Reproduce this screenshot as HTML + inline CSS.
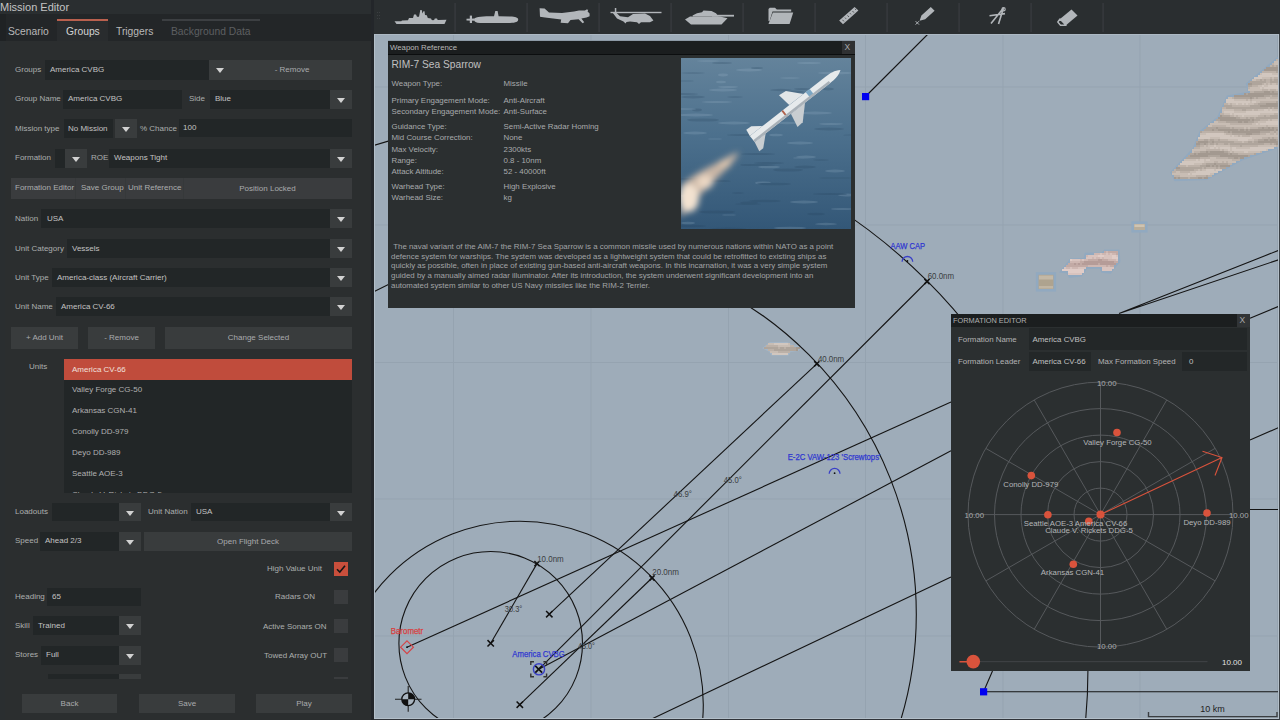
<!DOCTYPE html>
<html><head><meta charset="utf-8">
<style>
*{margin:0;padding:0;box-sizing:border-box}
html,body{width:1280px;height:720px;overflow:hidden;background:#9eacb9;font-family:"Liberation Sans",sans-serif}
.a{position:absolute}
#left{position:absolute;left:0;top:0;width:374px;height:720px;background:#2a2e30;overflow:hidden}
.t{position:absolute;white-space:nowrap;height:20px;line-height:20px;font-size:8px;color:#acaeae}
.inp{position:absolute;background:#222627;height:19px}
.btn{position:absolute;background:#393c3d;height:19px}
.bt{position:absolute;white-space:nowrap;font-size:8px;color:#a9abad;text-align:center;line-height:19px;height:19px}
.dd{position:absolute;background:#393c3d;width:22px;height:19px}
.dd:after{content:"";position:absolute;left:6.5px;top:7.5px;border-left:4.5px solid transparent;border-right:4.5px solid transparent;border-top:5px solid #d2d2d2}
.it{position:absolute;left:72px;font-size:8px;color:#b0b0b0;line-height:20px;height:20px;white-space:nowrap}
.w{position:absolute;white-space:nowrap;font-size:7.9px;color:#a8aaac;line-height:11px;height:11px}
.cb{position:absolute;width:14px;height:14px;background:#3a3c3e;left:334px}
</style></head><body>

<div id="left">
  <div class="t" style="left:0;top:-3.5px;font-size:11px;color:#c4c4c4">Mission Editor</div>
  <!-- tab row -->
  <div class="a" style="left:0;top:14px;width:374px;height:27px;background:#232628"></div>
  <div class="a" style="left:0;top:14px;width:6px;height:27px;background:#1f2224"></div>
  <div class="a" style="left:57px;top:21px;width:51px;height:20px;background:#292c2e"></div>
  <div class="a" style="left:57px;top:19px;width:51px;height:2px;background:#b9604e"></div>
  <div class="a" style="left:162px;top:19px;width:98px;height:2px;background:#3c3f42"></div>
  <div class="t" style="left:8px;top:22px;font-size:10.3px;color:#b9b9b9">Scenario</div>
  <div class="t" style="left:66px;top:22px;font-size:10.3px;color:#d4d4d4">Groups</div>
  <div class="t" style="left:116px;top:22px;font-size:10.3px;color:#b9b9b9">Triggers</div>
  <div class="t" style="left:171px;top:22px;font-size:10.3px;color:#5d5f61">Background Data</div>
  <!-- content -->
  <div class="a" style="left:5px;top:41px;width:369px;height:679px;background:#2b2e2f"></div>

  <!-- Groups row -->
  <div class="t" style="left:15px;top:60px">Groups</div>
  <div class="inp" style="left:45px;top:60px;width:164px;height:20px"></div>
  <div class="t" style="left:50px;top:60px;color:#c2c2c2">America CVBG</div>
  <div class="btn" style="left:209px;top:60px;width:143px;height:20px"></div>
  <div class="dd" style="left:209px;top:60px;background:transparent"></div>
  <div class="bt" style="left:232px;top:60px;width:120px;line-height:20px">- Remove</div>

  <!-- Group name row -->
  <div class="t" style="left:15px;top:89px">Group Name</div>
  <div class="inp" style="left:63px;top:90px;width:119px"></div>
  <div class="t" style="left:68px;top:89px;color:#c2c2c2">America CVBG</div>
  <div class="t" style="left:189px;top:89px">Side</div>
  <div class="inp" style="left:210px;top:90px;width:120px"></div>
  <div class="t" style="left:215px;top:89px;color:#c2c2c2">Blue</div>
  <div class="dd" style="left:330px;top:90px"></div>

  <!-- Mission type row -->
  <div class="t" style="left:15px;top:119px">Mission type</div>
  <div class="inp" style="left:64px;top:119px;width:49px"></div>
  <div class="t" style="left:68px;top:119px;color:#c2c2c2">No Mission</div>
  <div class="dd" style="left:115px;top:119px"></div>
  <div class="t" style="left:140px;top:119px">% Chance</div>
  <div class="inp" style="left:179px;top:119px;width:173px;height:18px"></div>
  <div class="t" style="left:183px;top:118px;color:#c2c2c2">100</div>

  <!-- Formation row -->
  <div class="t" style="left:15px;top:148px">Formation</div>
  <div class="inp" style="left:55px;top:149px;width:10px"></div>
  <div class="dd" style="left:65px;top:149px"></div>
  <div class="t" style="left:91px;top:148px">ROE</div>
  <div class="inp" style="left:109px;top:149px;width:221px"></div>
  <div class="t" style="left:114px;top:148px;color:#c2c2c2">Weapons Tight</div>
  <div class="dd" style="left:330px;top:149px"></div>

  <!-- Formation editor bar -->
  <div class="btn" style="left:11px;top:178px;width:341px;height:21px;background:#3a3c3e"></div>
  <div class="a" style="left:75px;top:178px;width:1px;height:21px;background:#36393a"></div>
  <div class="a" style="left:125px;top:178px;width:1px;height:21px;background:#36393a"></div>
  <div class="a" style="left:183px;top:178px;width:1px;height:21px;background:#36393a"></div>
  <div class="t" style="left:15px;top:178px">Formation Editor</div>
  <div class="t" style="left:81px;top:178px">Save Group</div>
  <div class="t" style="left:128px;top:178px">Unit Reference</div>
  <div class="bt" style="left:183px;top:178px;width:169px;line-height:21px;height:21px">Position Locked</div>

  <!-- Nation -->
  <div class="t" style="left:15px;top:209px">Nation</div>
  <div class="inp" style="left:41px;top:209px;width:289px"></div>
  <div class="t" style="left:47px;top:209px;color:#c2c2c2">USA</div>
  <div class="dd" style="left:330px;top:209px"></div>

  <!-- Unit category -->
  <div class="t" style="left:15px;top:239px">Unit Category</div>
  <div class="inp" style="left:67px;top:239px;width:263px"></div>
  <div class="t" style="left:72px;top:239px;color:#c2c2c2">Vessels</div>
  <div class="dd" style="left:330px;top:239px"></div>

  <!-- Unit type -->
  <div class="t" style="left:15px;top:268px">Unit Type</div>
  <div class="inp" style="left:52px;top:268px;width:278px"></div>
  <div class="t" style="left:57px;top:268px;color:#c2c2c2">America-class (Aircraft Carrier)</div>
  <div class="dd" style="left:330px;top:268px"></div>

  <!-- Unit name -->
  <div class="t" style="left:15px;top:297px">Unit Name</div>
  <div class="inp" style="left:56px;top:297px;width:274px"></div>
  <div class="t" style="left:61px;top:297px;color:#c2c2c2">America CV-66</div>
  <div class="dd" style="left:330px;top:297px"></div>

  <!-- buttons -->
  <div class="btn" style="left:11px;top:327px;width:67px;height:22px"></div>
  <div class="bt" style="left:11px;top:327px;width:67px;line-height:22px;height:22px">+ Add Unit</div>
  <div class="btn" style="left:88px;top:327px;width:67px;height:22px"></div>
  <div class="bt" style="left:88px;top:327px;width:67px;line-height:22px;height:22px">- Remove</div>
  <div class="btn" style="left:165px;top:327px;width:187px;height:22px"></div>
  <div class="bt" style="left:165px;top:327px;width:187px;line-height:22px;height:22px">Change Selected</div>

  <!-- units list -->
  <div class="t" style="left:29px;top:357px">Units</div>
  <div class="a" style="left:64px;top:359px;width:288px;height:134px;background:#222627;overflow:hidden">
    <div class="a" style="left:0;top:0;width:288px;height:21px;background:#c04c3c"></div>
    <div class="it" style="left:8px;top:1px;color:#f0e0dc">America CV-66</div>
    <div class="it" style="left:8px;top:21px">Valley Forge CG-50</div>
    <div class="it" style="left:8px;top:42px">Arkansas CGN-41</div>
    <div class="it" style="left:8px;top:63px">Conolly DD-979</div>
    <div class="it" style="left:8px;top:84px">Deyo DD-989</div>
    <div class="it" style="left:8px;top:105px">Seattle AOE-3</div>
    <div class="it" style="left:8px;top:126px">Claude V. Rickets DDG-5</div>
  </div>

  <!-- Loadouts -->
  <div class="t" style="left:15px;top:502px">Loadouts</div>
  <div class="inp" style="left:52px;top:503px;width:67px;height:18px"></div>
  <div class="dd" style="left:119px;top:503px;height:18px"></div>
  <div class="t" style="left:148px;top:502px">Unit Nation</div>
  <div class="inp" style="left:191px;top:503px;width:139px;height:18px"></div>
  <div class="t" style="left:196px;top:502px;color:#c2c2c2">USA</div>
  <div class="dd" style="left:330px;top:503px;height:18px"></div>

  <!-- Speed -->
  <div class="t" style="left:15px;top:531px">Speed</div>
  <div class="inp" style="left:40px;top:532px;width:79px"></div>
  <div class="t" style="left:45px;top:531px;color:#c2c2c2">Ahead 2/3</div>
  <div class="dd" style="left:119px;top:532px"></div>
  <div class="btn" style="left:144px;top:532px;width:208px"></div>
  <div class="bt" style="left:144px;top:532px;width:208px">Open Flight Deck</div>

  <!-- right checkboxes -->
  <div class="t" style="left:267px;top:559px">High Value Unit</div>
  <div class="cb" style="top:562px;background:#c94f3c"></div>
  <svg class="a" style="left:334px;top:562px" width="14" height="14"><path d="M3 7.2 L5.8 10 L11 3.8" stroke="#151515" stroke-width="1.6" fill="none"/></svg>
  <div class="t" style="left:275px;top:587px">Radars ON</div>
  <div class="cb" style="top:590px"></div>
  <div class="t" style="left:263px;top:616.5px">Active Sonars ON</div>
  <div class="cb" style="top:619px"></div>
  <div class="t" style="left:264px;top:645.5px">Towed Array OUT</div>
  <div class="cb" style="top:648px"></div>

  <!-- Heading etc -->
  <div class="t" style="left:15px;top:587px">Heading</div>
  <div class="inp" style="left:47px;top:588px;width:94px;height:18px"></div>
  <div class="t" style="left:52px;top:587px;color:#c2c2c2">65</div>

  <div class="t" style="left:15px;top:616px">Skill</div>
  <div class="inp" style="left:33px;top:616px;width:86px"></div>
  <div class="t" style="left:38px;top:616px;color:#c2c2c2">Trained</div>
  <div class="dd" style="left:119px;top:616px"></div>

  <div class="t" style="left:15px;top:645px">Stores</div>
  <div class="inp" style="left:41px;top:646px;width:78px"></div>
  <div class="t" style="left:46px;top:645px;color:#c2c2c2">Full</div>
  <div class="dd" style="left:119px;top:646px"></div>

  <div class="inp" style="left:48px;top:674px;width:71px;height:5px"></div>
  <div class="btn" style="left:119px;top:674px;width:22px;height:5px"></div>
  <div class="a" style="left:334px;top:677px;width:14px;height:2px;background:#3a3c3e"></div>

  <!-- bottom buttons -->
  <div class="btn" style="left:22px;top:694px;width:95px;height:19px"></div>
  <div class="bt" style="left:22px;top:694px;width:95px">Back</div>
  <div class="btn" style="left:139px;top:694px;width:96px;height:19px"></div>
  <div class="bt" style="left:139px;top:694px;width:96px">Save</div>
  <div class="btn" style="left:256px;top:694px;width:96px;height:19px"></div>
  <div class="bt" style="left:256px;top:694px;width:96px">Play</div>

  <div class="a" style="left:371px;top:0;width:3px;height:720px;background:#23262a"></div>
</div>

<!-- TOOLBAR -->
<div id="toolbar" class="a" style="left:374px;top:0;width:906px;height:34px;background:#2a2e30"></div>
<svg class="a" style="left:0;top:0" width="1280" height="34" viewBox="0 0 1280 34">
 <g fill="#3a3d40">
  <rect x="454.5" y="3" width="1.2" height="29"/><rect x="526.5" y="3" width="1.2" height="29"/><rect x="598.5" y="3" width="1.2" height="29"/>
  <rect x="670.5" y="3" width="1.2" height="29"/><rect x="742.5" y="3" width="1.2" height="29"/><rect x="814.5" y="3" width="1.2" height="29"/>
  <rect x="886.5" y="3" width="1.2" height="29"/><rect x="958.5" y="3" width="1.2" height="29"/><rect x="1030.5" y="3" width="1.2" height="29"/>
  <rect x="1102.5" y="3" width="1.2" height="29"/>
 </g>
 <g fill="#3b3e41"><rect x="377" y="12" width="1" height="1"/><rect x="379" y="12" width="1" height="1"/><rect x="377" y="15" width="1" height="1"/><rect x="379" y="15" width="1" height="1"/><rect x="377" y="18" width="1" height="1"/><rect x="379" y="18" width="1" height="1"/></g>
 <g fill="#b2b6ba">
  <path d="M394.5,21.3 L446.5,19.8 L444.5,24 L396.5,24 Z M401,21.5 L402,20.4 L408,20.2 L409,18 L413,18 L414,14.6 L416,14.6 L417,16.8 L419,16.8 L420.3,10 L421.7,10 L422.5,13.4 L423.4,11.2 L424.5,11.2 L425,15 L426.8,15.2 L427.8,18 L431,18.4 L432,20.6 Z M434,20.2 L434.8,18.6 L437,18.6 L437.8,20.2 Z"/>
  <path d="M474,19.6 C474,17 480,16.2 490,16.2 L494,16.2 L495.3,11 L497.6,11 L498.6,16.2 L512,16.6 C516.6,17 518.2,18.2 518.2,19.6 C518.2,21.6 516,23 510,23 L480,23 C476,23 474,21.8 474,19.6 Z"/>
  <path d="M466.5,18.8 L474.5,18.4 L474.5,20.8 L466.5,20.4 Z"/>
  <rect x="469.8" y="15.6" width="2.2" height="7.4"/>
  <path d="M539.6,8.2 L544.6,8.6 L549,12.6 L562,13 L574,11.4 L579,10.4 L585,10.4 L586.4,9.6 L588.2,9.8 L587.6,11.6 L589.6,13.6 L589.6,16.2 L586.5,17.4 L581.4,18.4 L584.2,22.2 L582.6,23.2 L578.6,19.2 L570.5,20 L568,23.2 L560.6,22.8 L561.2,19.6 L545,17.6 L540,16.8 Z"/>
  <rect x="610.5" y="11.8" width="51" height="1.4"/>
  <rect x="614.8" y="8" width="1.5" height="6"/>
  <path d="M612.5,12.5 L616,12.5 L620,16.2 L628,17.2 L633,14 L645,13.6 L650,16 L653.4,20.4 L650,22.2 L641,22.2 L639,24 L637,22.2 L630,21.6 L626.5,22 L625.5,23.6 L623.5,21.4 L617,18.6 Z"/>
  <path d="M685,19.4 L690,16.6 L720,16.6 L727.5,18.2 L721.5,24.4 L691,24.4 Z"/>
  <path d="M692.5,15.4 L697,13.2 L702,12.2 L703.5,10.6 L711.5,11 L716,13.2 L718.5,16.6 L693,16.6 Z"/>
  <rect x="712" y="14.8" width="22" height="1.8"/>
  <path d="M768.5,9 L769.8,7.8 L775,7.8 L776.8,9.6 L791.2,9.6 L791.2,11.6 L772.5,11.6 L769.6,21 L768.5,21 Z"/>
  <path d="M772.8,12.6 L793.2,12.6 L789.6,24 L768.5,24 Z"/>
  <path d="M839.2,20.6 L854.6,6.9 L858.4,10.6 L843,24.2 Z"/>
  <path d="M921.4,15.4 L930.8,7 L934.6,10.8 L925.2,19.2 Z M921.4,15.4 L925.2,19.2 L919.6,20.8 Z"/>
  <path d="M1060,19 L1071.5,9.4 L1077.5,15.6 L1066,25.2 Z"/>
 </g>
 <g stroke="#2a2c2e" stroke-width="0.7">
  <path d="M842.5,19.8 l1.4,1.6 M845,17.6 l1,1.2 M847.5,15.4 l1.4,1.6 M850,13.2 l1,1.2 M852.5,11 l1.4,1.6 M855,8.8 l1,1.2"/>
 </g>
 <g stroke="#b2b6ba" fill="none">
  <path d="M915.6,21.2 l3.4,3.4 M919,21.2 l-3.4,3.4" stroke-width="1"/>
  <path d="M1003.5,8 L991,23.5 M1003.5,8 L998.5,24 M989.5,15.8 L1005,13.6" stroke-width="1.6"/>
  <circle cx="1003.6" cy="9.2" r="1.6" stroke-width="1.2"/>
  <path d="M1060,19 L1066,25.2 L1060.5,25.2 L1057.8,22 Z" stroke-width="1.4" stroke-linejoin="round"/>
 </g>
</svg>

<svg id="map" class="a" style="left:374px;top:34px" width="906" height="686" viewBox="374 34 906 686">
 <rect x="374" y="34" width="906" height="686" fill="#9eacb9"/>
 <g stroke="#95a3b0" stroke-width="1">
  <path d="M453.5,34 V720 M591,34 V720 M728.5,34 V720 M865.5,34 V720 M1003,34 V720 M1140,34 V720 M1277.5,34 V720"/>
  <path d="M374,87 H1280 M374,225 H1280 M374,362.5 H1280 M374,499 H1280 M374,636 H1280"/>
 </g>
 <!-- islands -->
 <g stroke="#91a9c0" stroke-width="3.2" stroke-linejoin="miter" fill="#aea398">
  <path d="M1280,57 L1247.5,84 L1249.5,93 L1228,97 L1218.5,118 L1201,132 L1194,149 L1172,172.5 L1175.5,179.5 L1206.5,178.5 L1241.5,159 L1276.5,147 L1280,147 Z"/>
  <path d="M1062,271.2 L1071,260 L1085,259.4 L1086,254.4 L1102.5,253.8 L1105,251.2 L1118,251.2 L1118.8,261.2 L1112.5,268.8 L1110,272 L1102.5,271.2 L1101,267 L1086,267.5 L1081,275 L1070,276.2 L1067.5,272 Z"/>
  <rect x="1037.5" y="273.8" width="17" height="16.2"/>
  <rect x="1133" y="223" width="13" height="8"/>
  <path d="M764,348 L770,343 L787,343 L793,346 L801,347 L798,350 L790,351 L788,354.5 L772,354.5 L770,351 Z" stroke="#a3b5c6" stroke-width="2"/>
 </g>
 <g><rect x="1278" y="57" width="2" height="2" fill="#a39990"/><rect x="1276" y="59" width="2" height="2" fill="#bcb1a8"/><rect x="1278" y="59" width="2" height="2" fill="#afa59c"/><rect x="1274" y="61" width="4" height="2" fill="#c8bdb4"/><rect x="1278" y="61" width="2" height="2" fill="#bcb1a8"/><rect x="1272" y="63" width="2" height="2" fill="#bcb1a8"/><rect x="1274" y="63" width="6" height="2" fill="#c8bdb4"/><rect x="1270" y="65" width="2" height="2" fill="#bcb1a8"/><rect x="1272" y="65" width="2" height="2" fill="#afa59c"/><rect x="1274" y="65" width="2" height="2" fill="#bcb1a8"/><rect x="1276" y="65" width="2" height="2" fill="#afa59c"/><rect x="1278" y="65" width="2" height="2" fill="#bcb1a8"/><rect x="1266" y="67" width="14" height="2" fill="#a39990"/><rect x="1264" y="69" width="16" height="2" fill="#a39990"/><rect x="1262" y="71" width="14" height="2" fill="#bcb1a8"/><rect x="1276" y="71" width="4" height="2" fill="#afa59c"/><rect x="1260" y="73" width="2" height="2" fill="#c8bdb4"/><rect x="1262" y="73" width="10" height="2" fill="#d2c7bf"/><rect x="1272" y="73" width="8" height="2" fill="#c8bdb4"/><rect x="1258" y="75" width="22" height="2" fill="#d2c7bf"/><rect x="1254" y="77" width="8" height="2" fill="#d2c7bf"/><rect x="1262" y="77" width="8" height="2" fill="#c8bdb4"/><rect x="1270" y="77" width="2" height="2" fill="#bcb1a8"/><rect x="1272" y="77" width="2" height="2" fill="#c8bdb4"/><rect x="1274" y="77" width="4" height="2" fill="#bcb1a8"/><rect x="1278" y="77" width="2" height="2" fill="#c8bdb4"/><rect x="1252" y="79" width="4" height="2" fill="#c8bdb4"/><rect x="1256" y="79" width="4" height="2" fill="#bcb1a8"/><rect x="1260" y="79" width="2" height="2" fill="#afa59c"/><rect x="1262" y="79" width="2" height="2" fill="#bcb1a8"/><rect x="1264" y="79" width="2" height="2" fill="#afa59c"/><rect x="1266" y="79" width="4" height="2" fill="#bcb1a8"/><rect x="1270" y="79" width="2" height="2" fill="#afa59c"/><rect x="1272" y="79" width="2" height="2" fill="#bcb1a8"/><rect x="1274" y="79" width="6" height="2" fill="#afa59c"/><rect x="1250" y="81" width="16" height="2" fill="#afa59c"/><rect x="1266" y="81" width="4" height="2" fill="#bcb1a8"/><rect x="1270" y="81" width="10" height="2" fill="#afa59c"/><rect x="1248" y="83" width="4" height="2" fill="#a39990"/><rect x="1252" y="83" width="10" height="2" fill="#afa59c"/><rect x="1262" y="83" width="2" height="2" fill="#bcb1a8"/><rect x="1264" y="83" width="2" height="2" fill="#c8bdb4"/><rect x="1266" y="83" width="2" height="2" fill="#bcb1a8"/><rect x="1268" y="83" width="2" height="2" fill="#c8bdb4"/><rect x="1270" y="83" width="2" height="2" fill="#bcb1a8"/><rect x="1272" y="83" width="4" height="2" fill="#c8bdb4"/><rect x="1276" y="83" width="4" height="2" fill="#bcb1a8"/><rect x="1248" y="85" width="4" height="2" fill="#afa59c"/><rect x="1252" y="85" width="6" height="2" fill="#bcb1a8"/><rect x="1258" y="85" width="4" height="2" fill="#c8bdb4"/><rect x="1262" y="85" width="2" height="2" fill="#d2c7bf"/><rect x="1264" y="85" width="4" height="2" fill="#c8bdb4"/><rect x="1268" y="85" width="12" height="2" fill="#d2c7bf"/><rect x="1248" y="87" width="2" height="2" fill="#bcb1a8"/><rect x="1250" y="87" width="10" height="2" fill="#c8bdb4"/><rect x="1260" y="87" width="2" height="2" fill="#d2c7bf"/><rect x="1262" y="87" width="2" height="2" fill="#c8bdb4"/><rect x="1264" y="87" width="16" height="2" fill="#d2c7bf"/><rect x="1248" y="89" width="14" height="2" fill="#c8bdb4"/><rect x="1262" y="89" width="6" height="2" fill="#bcb1a8"/><rect x="1268" y="89" width="2" height="2" fill="#c8bdb4"/><rect x="1270" y="89" width="6" height="2" fill="#bcb1a8"/><rect x="1276" y="89" width="4" height="2" fill="#c8bdb4"/><rect x="1250" y="91" width="4" height="2" fill="#bcb1a8"/><rect x="1254" y="91" width="10" height="2" fill="#afa59c"/><rect x="1264" y="91" width="6" height="2" fill="#a39990"/><rect x="1270" y="91" width="2" height="2" fill="#afa59c"/><rect x="1272" y="91" width="2" height="2" fill="#a39990"/><rect x="1274" y="91" width="6" height="2" fill="#afa59c"/><rect x="1244" y="93" width="2" height="2" fill="#a39990"/><rect x="1246" y="93" width="2" height="2" fill="#afa59c"/><rect x="1248" y="93" width="32" height="2" fill="#a39990"/><rect x="1234" y="95" width="30" height="2" fill="#a39990"/><rect x="1264" y="95" width="6" height="2" fill="#afa59c"/><rect x="1270" y="95" width="2" height="2" fill="#bcb1a8"/><rect x="1272" y="95" width="6" height="2" fill="#afa59c"/><rect x="1278" y="95" width="2" height="2" fill="#bcb1a8"/><rect x="1228" y="97" width="4" height="2" fill="#c8bdb4"/><rect x="1232" y="97" width="2" height="2" fill="#bcb1a8"/><rect x="1234" y="97" width="16" height="2" fill="#afa59c"/><rect x="1250" y="97" width="2" height="2" fill="#a39990"/><rect x="1252" y="97" width="2" height="2" fill="#afa59c"/><rect x="1254" y="97" width="2" height="2" fill="#bcb1a8"/><rect x="1256" y="97" width="2" height="2" fill="#afa59c"/><rect x="1258" y="97" width="8" height="2" fill="#bcb1a8"/><rect x="1266" y="97" width="4" height="2" fill="#c8bdb4"/><rect x="1270" y="97" width="10" height="2" fill="#bcb1a8"/><rect x="1226" y="99" width="8" height="2" fill="#d2c7bf"/><rect x="1234" y="99" width="12" height="2" fill="#c8bdb4"/><rect x="1246" y="99" width="2" height="2" fill="#bcb1a8"/><rect x="1248" y="99" width="2" height="2" fill="#c8bdb4"/><rect x="1250" y="99" width="2" height="2" fill="#bcb1a8"/><rect x="1252" y="99" width="28" height="2" fill="#c8bdb4"/><rect x="1226" y="101" width="24" height="2" fill="#d2c7bf"/><rect x="1250" y="101" width="2" height="2" fill="#c8bdb4"/><rect x="1252" y="101" width="4" height="2" fill="#d2c7bf"/><rect x="1256" y="101" width="4" height="2" fill="#c8bdb4"/><rect x="1260" y="101" width="16" height="2" fill="#bcb1a8"/><rect x="1276" y="101" width="2" height="2" fill="#afa59c"/><rect x="1278" y="101" width="2" height="2" fill="#bcb1a8"/><rect x="1224" y="103" width="4" height="2" fill="#bcb1a8"/><rect x="1228" y="103" width="2" height="2" fill="#c8bdb4"/><rect x="1230" y="103" width="2" height="2" fill="#bcb1a8"/><rect x="1232" y="103" width="4" height="2" fill="#c8bdb4"/><rect x="1236" y="103" width="2" height="2" fill="#d2c7bf"/><rect x="1238" y="103" width="4" height="2" fill="#c8bdb4"/><rect x="1242" y="103" width="2" height="2" fill="#d2c7bf"/><rect x="1244" y="103" width="2" height="2" fill="#c8bdb4"/><rect x="1246" y="103" width="2" height="2" fill="#d2c7bf"/><rect x="1248" y="103" width="6" height="2" fill="#c8bdb4"/><rect x="1254" y="103" width="4" height="2" fill="#bcb1a8"/><rect x="1258" y="103" width="8" height="2" fill="#afa59c"/><rect x="1266" y="103" width="14" height="2" fill="#a39990"/><rect x="1224" y="105" width="8" height="2" fill="#afa59c"/><rect x="1232" y="105" width="18" height="2" fill="#bcb1a8"/><rect x="1250" y="105" width="10" height="2" fill="#afa59c"/><rect x="1260" y="105" width="20" height="2" fill="#a39990"/><rect x="1222" y="107" width="4" height="2" fill="#bcb1a8"/><rect x="1226" y="107" width="42" height="2" fill="#afa59c"/><rect x="1268" y="107" width="2" height="2" fill="#bcb1a8"/><rect x="1270" y="107" width="2" height="2" fill="#afa59c"/><rect x="1272" y="107" width="2" height="2" fill="#bcb1a8"/><rect x="1274" y="107" width="6" height="2" fill="#afa59c"/><rect x="1222" y="109" width="12" height="2" fill="#c8bdb4"/><rect x="1234" y="109" width="8" height="2" fill="#bcb1a8"/><rect x="1242" y="109" width="4" height="2" fill="#afa59c"/><rect x="1246" y="109" width="6" height="2" fill="#bcb1a8"/><rect x="1252" y="109" width="2" height="2" fill="#c8bdb4"/><rect x="1254" y="109" width="4" height="2" fill="#bcb1a8"/><rect x="1258" y="109" width="6" height="2" fill="#c8bdb4"/><rect x="1264" y="109" width="4" height="2" fill="#d2c7bf"/><rect x="1268" y="109" width="2" height="2" fill="#c8bdb4"/><rect x="1270" y="109" width="2" height="2" fill="#d2c7bf"/><rect x="1272" y="109" width="6" height="2" fill="#c8bdb4"/><rect x="1278" y="109" width="2" height="2" fill="#bcb1a8"/><rect x="1222" y="111" width="2" height="2" fill="#c8bdb4"/><rect x="1224" y="111" width="10" height="2" fill="#d2c7bf"/><rect x="1234" y="111" width="12" height="2" fill="#c8bdb4"/><rect x="1246" y="111" width="34" height="2" fill="#d2c7bf"/><rect x="1220" y="113" width="4" height="2" fill="#bcb1a8"/><rect x="1224" y="113" width="6" height="2" fill="#c8bdb4"/><rect x="1230" y="113" width="2" height="2" fill="#d2c7bf"/><rect x="1232" y="113" width="2" height="2" fill="#c8bdb4"/><rect x="1234" y="113" width="26" height="2" fill="#d2c7bf"/><rect x="1260" y="113" width="14" height="2" fill="#c8bdb4"/><rect x="1274" y="113" width="6" height="2" fill="#bcb1a8"/><rect x="1220" y="115" width="2" height="2" fill="#a39990"/><rect x="1222" y="115" width="8" height="2" fill="#afa59c"/><rect x="1230" y="115" width="4" height="2" fill="#bcb1a8"/><rect x="1234" y="115" width="2" height="2" fill="#c8bdb4"/><rect x="1236" y="115" width="2" height="2" fill="#bcb1a8"/><rect x="1238" y="115" width="4" height="2" fill="#c8bdb4"/><rect x="1242" y="115" width="2" height="2" fill="#d2c7bf"/><rect x="1244" y="115" width="14" height="2" fill="#c8bdb4"/><rect x="1258" y="115" width="6" height="2" fill="#bcb1a8"/><rect x="1264" y="115" width="2" height="2" fill="#afa59c"/><rect x="1266" y="115" width="4" height="2" fill="#bcb1a8"/><rect x="1270" y="115" width="8" height="2" fill="#afa59c"/><rect x="1278" y="115" width="2" height="2" fill="#bcb1a8"/><rect x="1218" y="117" width="18" height="2" fill="#a39990"/><rect x="1236" y="117" width="4" height="2" fill="#afa59c"/><rect x="1240" y="117" width="6" height="2" fill="#bcb1a8"/><rect x="1246" y="117" width="2" height="2" fill="#afa59c"/><rect x="1248" y="117" width="2" height="2" fill="#bcb1a8"/><rect x="1250" y="117" width="4" height="2" fill="#afa59c"/><rect x="1254" y="117" width="2" height="2" fill="#bcb1a8"/><rect x="1256" y="117" width="24" height="2" fill="#afa59c"/><rect x="1216" y="119" width="4" height="2" fill="#afa59c"/><rect x="1220" y="119" width="30" height="2" fill="#a39990"/><rect x="1250" y="119" width="2" height="2" fill="#afa59c"/><rect x="1252" y="119" width="2" height="2" fill="#a39990"/><rect x="1254" y="119" width="6" height="2" fill="#afa59c"/><rect x="1260" y="119" width="8" height="2" fill="#bcb1a8"/><rect x="1268" y="119" width="2" height="2" fill="#c8bdb4"/><rect x="1270" y="119" width="2" height="2" fill="#bcb1a8"/><rect x="1272" y="119" width="6" height="2" fill="#c8bdb4"/><rect x="1278" y="119" width="2" height="2" fill="#bcb1a8"/><rect x="1214" y="121" width="4" height="2" fill="#c8bdb4"/><rect x="1218" y="121" width="8" height="2" fill="#bcb1a8"/><rect x="1226" y="121" width="12" height="2" fill="#afa59c"/><rect x="1238" y="121" width="4" height="2" fill="#a39990"/><rect x="1242" y="121" width="2" height="2" fill="#afa59c"/><rect x="1244" y="121" width="4" height="2" fill="#a39990"/><rect x="1248" y="121" width="6" height="2" fill="#afa59c"/><rect x="1254" y="121" width="4" height="2" fill="#bcb1a8"/><rect x="1258" y="121" width="8" height="2" fill="#c8bdb4"/><rect x="1266" y="121" width="14" height="2" fill="#d2c7bf"/><rect x="1210" y="123" width="20" height="2" fill="#c8bdb4"/><rect x="1230" y="123" width="22" height="2" fill="#bcb1a8"/><rect x="1252" y="123" width="4" height="2" fill="#c8bdb4"/><rect x="1256" y="123" width="2" height="2" fill="#d2c7bf"/><rect x="1258" y="123" width="2" height="2" fill="#c8bdb4"/><rect x="1260" y="123" width="20" height="2" fill="#d2c7bf"/><rect x="1208" y="125" width="4" height="2" fill="#c8bdb4"/><rect x="1212" y="125" width="14" height="2" fill="#bcb1a8"/><rect x="1226" y="125" width="40" height="2" fill="#c8bdb4"/><rect x="1266" y="125" width="2" height="2" fill="#bcb1a8"/><rect x="1268" y="125" width="12" height="2" fill="#c8bdb4"/><rect x="1206" y="127" width="10" height="2" fill="#afa59c"/><rect x="1216" y="127" width="2" height="2" fill="#a39990"/><rect x="1218" y="127" width="12" height="2" fill="#afa59c"/><rect x="1230" y="127" width="2" height="2" fill="#bcb1a8"/><rect x="1232" y="127" width="2" height="2" fill="#afa59c"/><rect x="1234" y="127" width="10" height="2" fill="#bcb1a8"/><rect x="1244" y="127" width="2" height="2" fill="#c8bdb4"/><rect x="1246" y="127" width="2" height="2" fill="#bcb1a8"/><rect x="1248" y="127" width="2" height="2" fill="#c8bdb4"/><rect x="1250" y="127" width="8" height="2" fill="#bcb1a8"/><rect x="1258" y="127" width="4" height="2" fill="#afa59c"/><rect x="1262" y="127" width="2" height="2" fill="#a39990"/><rect x="1264" y="127" width="4" height="2" fill="#afa59c"/><rect x="1268" y="127" width="2" height="2" fill="#a39990"/><rect x="1270" y="127" width="2" height="2" fill="#afa59c"/><rect x="1272" y="127" width="2" height="2" fill="#a39990"/><rect x="1274" y="127" width="6" height="2" fill="#afa59c"/><rect x="1204" y="129" width="8" height="2" fill="#afa59c"/><rect x="1212" y="129" width="2" height="2" fill="#a39990"/><rect x="1214" y="129" width="4" height="2" fill="#afa59c"/><rect x="1218" y="129" width="20" height="2" fill="#a39990"/><rect x="1238" y="129" width="2" height="2" fill="#afa59c"/><rect x="1240" y="129" width="4" height="2" fill="#a39990"/><rect x="1244" y="129" width="2" height="2" fill="#afa59c"/><rect x="1246" y="129" width="2" height="2" fill="#a39990"/><rect x="1248" y="129" width="2" height="2" fill="#afa59c"/><rect x="1250" y="129" width="24" height="2" fill="#a39990"/><rect x="1274" y="129" width="2" height="2" fill="#afa59c"/><rect x="1276" y="129" width="2" height="2" fill="#a39990"/><rect x="1278" y="129" width="2" height="2" fill="#afa59c"/><rect x="1200" y="131" width="2" height="2" fill="#afa59c"/><rect x="1202" y="131" width="22" height="2" fill="#bcb1a8"/><rect x="1224" y="131" width="4" height="2" fill="#afa59c"/><rect x="1228" y="131" width="2" height="2" fill="#a39990"/><rect x="1230" y="131" width="2" height="2" fill="#afa59c"/><rect x="1232" y="131" width="28" height="2" fill="#a39990"/><rect x="1260" y="131" width="10" height="2" fill="#afa59c"/><rect x="1270" y="131" width="4" height="2" fill="#bcb1a8"/><rect x="1274" y="131" width="2" height="2" fill="#afa59c"/><rect x="1276" y="131" width="2" height="2" fill="#bcb1a8"/><rect x="1278" y="131" width="2" height="2" fill="#afa59c"/><rect x="1200" y="133" width="6" height="2" fill="#c8bdb4"/><rect x="1206" y="133" width="18" height="2" fill="#d2c7bf"/><rect x="1224" y="133" width="2" height="2" fill="#c8bdb4"/><rect x="1226" y="133" width="6" height="2" fill="#bcb1a8"/><rect x="1232" y="133" width="14" height="2" fill="#afa59c"/><rect x="1246" y="133" width="6" height="2" fill="#a39990"/><rect x="1252" y="133" width="8" height="2" fill="#afa59c"/><rect x="1260" y="133" width="6" height="2" fill="#bcb1a8"/><rect x="1266" y="133" width="4" height="2" fill="#c8bdb4"/><rect x="1270" y="133" width="4" height="2" fill="#bcb1a8"/><rect x="1274" y="133" width="2" height="2" fill="#c8bdb4"/><rect x="1276" y="133" width="4" height="2" fill="#bcb1a8"/><rect x="1200" y="135" width="30" height="2" fill="#d2c7bf"/><rect x="1230" y="135" width="2" height="2" fill="#c8bdb4"/><rect x="1232" y="135" width="2" height="2" fill="#d2c7bf"/><rect x="1234" y="135" width="4" height="2" fill="#c8bdb4"/><rect x="1238" y="135" width="2" height="2" fill="#bcb1a8"/><rect x="1240" y="135" width="2" height="2" fill="#c8bdb4"/><rect x="1242" y="135" width="8" height="2" fill="#bcb1a8"/><rect x="1250" y="135" width="30" height="2" fill="#c8bdb4"/><rect x="1198" y="137" width="12" height="2" fill="#d2c7bf"/><rect x="1210" y="137" width="10" height="2" fill="#c8bdb4"/><rect x="1220" y="137" width="32" height="2" fill="#d2c7bf"/><rect x="1252" y="137" width="10" height="2" fill="#c8bdb4"/><rect x="1262" y="137" width="6" height="2" fill="#bcb1a8"/><rect x="1268" y="137" width="2" height="2" fill="#afa59c"/><rect x="1270" y="137" width="2" height="2" fill="#bcb1a8"/><rect x="1272" y="137" width="2" height="2" fill="#afa59c"/><rect x="1274" y="137" width="6" height="2" fill="#bcb1a8"/><rect x="1198" y="139" width="6" height="2" fill="#bcb1a8"/><rect x="1204" y="139" width="4" height="2" fill="#afa59c"/><rect x="1208" y="139" width="2" height="2" fill="#bcb1a8"/><rect x="1210" y="139" width="4" height="2" fill="#afa59c"/><rect x="1214" y="139" width="4" height="2" fill="#bcb1a8"/><rect x="1218" y="139" width="2" height="2" fill="#afa59c"/><rect x="1220" y="139" width="8" height="2" fill="#bcb1a8"/><rect x="1228" y="139" width="10" height="2" fill="#c8bdb4"/><rect x="1238" y="139" width="10" height="2" fill="#d2c7bf"/><rect x="1248" y="139" width="6" height="2" fill="#c8bdb4"/><rect x="1254" y="139" width="4" height="2" fill="#bcb1a8"/><rect x="1258" y="139" width="6" height="2" fill="#afa59c"/><rect x="1264" y="139" width="4" height="2" fill="#a39990"/><rect x="1268" y="139" width="2" height="2" fill="#afa59c"/><rect x="1270" y="139" width="6" height="2" fill="#a39990"/><rect x="1276" y="139" width="2" height="2" fill="#afa59c"/><rect x="1278" y="139" width="2" height="2" fill="#a39990"/><rect x="1196" y="141" width="2" height="2" fill="#afa59c"/><rect x="1198" y="141" width="10" height="2" fill="#a39990"/><rect x="1208" y="141" width="4" height="2" fill="#afa59c"/><rect x="1212" y="141" width="2" height="2" fill="#a39990"/><rect x="1214" y="141" width="20" height="2" fill="#afa59c"/><rect x="1234" y="141" width="8" height="2" fill="#bcb1a8"/><rect x="1242" y="141" width="2" height="2" fill="#c8bdb4"/><rect x="1244" y="141" width="4" height="2" fill="#bcb1a8"/><rect x="1248" y="141" width="4" height="2" fill="#afa59c"/><rect x="1252" y="141" width="2" height="2" fill="#bcb1a8"/><rect x="1254" y="141" width="4" height="2" fill="#afa59c"/><rect x="1258" y="141" width="22" height="2" fill="#a39990"/><rect x="1196" y="143" width="4" height="2" fill="#a39990"/><rect x="1200" y="143" width="4" height="2" fill="#afa59c"/><rect x="1204" y="143" width="2" height="2" fill="#a39990"/><rect x="1206" y="143" width="2" height="2" fill="#afa59c"/><rect x="1208" y="143" width="2" height="2" fill="#bcb1a8"/><rect x="1210" y="143" width="4" height="2" fill="#afa59c"/><rect x="1214" y="143" width="2" height="2" fill="#bcb1a8"/><rect x="1216" y="143" width="2" height="2" fill="#afa59c"/><rect x="1218" y="143" width="6" height="2" fill="#bcb1a8"/><rect x="1224" y="143" width="4" height="2" fill="#afa59c"/><rect x="1228" y="143" width="2" height="2" fill="#bcb1a8"/><rect x="1230" y="143" width="34" height="2" fill="#afa59c"/><rect x="1264" y="143" width="6" height="2" fill="#bcb1a8"/><rect x="1270" y="143" width="2" height="2" fill="#afa59c"/><rect x="1272" y="143" width="2" height="2" fill="#bcb1a8"/><rect x="1274" y="143" width="2" height="2" fill="#afa59c"/><rect x="1276" y="143" width="2" height="2" fill="#a39990"/><rect x="1278" y="143" width="2" height="2" fill="#afa59c"/><rect x="1196" y="145" width="4" height="2" fill="#afa59c"/><rect x="1200" y="145" width="4" height="2" fill="#bcb1a8"/><rect x="1204" y="145" width="2" height="2" fill="#c8bdb4"/><rect x="1206" y="145" width="2" height="2" fill="#bcb1a8"/><rect x="1208" y="145" width="6" height="2" fill="#c8bdb4"/><rect x="1214" y="145" width="2" height="2" fill="#d2c7bf"/><rect x="1216" y="145" width="14" height="2" fill="#c8bdb4"/><rect x="1230" y="145" width="10" height="2" fill="#bcb1a8"/><rect x="1240" y="145" width="2" height="2" fill="#afa59c"/><rect x="1242" y="145" width="16" height="2" fill="#bcb1a8"/><rect x="1258" y="145" width="18" height="2" fill="#c8bdb4"/><rect x="1276" y="145" width="4" height="2" fill="#bcb1a8"/><rect x="1194" y="147" width="6" height="2" fill="#bcb1a8"/><rect x="1200" y="147" width="10" height="2" fill="#c8bdb4"/><rect x="1210" y="147" width="4" height="2" fill="#d2c7bf"/><rect x="1214" y="147" width="2" height="2" fill="#c8bdb4"/><rect x="1216" y="147" width="2" height="2" fill="#d2c7bf"/><rect x="1218" y="147" width="2" height="2" fill="#c8bdb4"/><rect x="1220" y="147" width="10" height="2" fill="#d2c7bf"/><rect x="1230" y="147" width="2" height="2" fill="#c8bdb4"/><rect x="1232" y="147" width="4" height="2" fill="#d2c7bf"/><rect x="1236" y="147" width="14" height="2" fill="#c8bdb4"/><rect x="1250" y="147" width="24" height="2" fill="#d2c7bf"/><rect x="1192" y="149" width="14" height="2" fill="#c8bdb4"/><rect x="1206" y="149" width="14" height="2" fill="#bcb1a8"/><rect x="1220" y="149" width="2" height="2" fill="#c8bdb4"/><rect x="1222" y="149" width="2" height="2" fill="#bcb1a8"/><rect x="1224" y="149" width="4" height="2" fill="#c8bdb4"/><rect x="1228" y="149" width="2" height="2" fill="#d2c7bf"/><rect x="1230" y="149" width="2" height="2" fill="#c8bdb4"/><rect x="1232" y="149" width="34" height="2" fill="#d2c7bf"/><rect x="1266" y="149" width="2" height="2" fill="#c8bdb4"/><rect x="1192" y="151" width="2" height="2" fill="#c8bdb4"/><rect x="1194" y="151" width="6" height="2" fill="#bcb1a8"/><rect x="1200" y="151" width="6" height="2" fill="#afa59c"/><rect x="1206" y="151" width="2" height="2" fill="#a39990"/><rect x="1208" y="151" width="2" height="2" fill="#afa59c"/><rect x="1210" y="151" width="14" height="2" fill="#a39990"/><rect x="1224" y="151" width="4" height="2" fill="#afa59c"/><rect x="1228" y="151" width="2" height="2" fill="#bcb1a8"/><rect x="1230" y="151" width="2" height="2" fill="#c8bdb4"/><rect x="1232" y="151" width="2" height="2" fill="#bcb1a8"/><rect x="1234" y="151" width="10" height="2" fill="#c8bdb4"/><rect x="1244" y="151" width="4" height="2" fill="#d2c7bf"/><rect x="1248" y="151" width="12" height="2" fill="#c8bdb4"/><rect x="1260" y="151" width="2" height="2" fill="#bcb1a8"/><rect x="1190" y="153" width="4" height="2" fill="#afa59c"/><rect x="1194" y="153" width="2" height="2" fill="#a39990"/><rect x="1196" y="153" width="2" height="2" fill="#afa59c"/><rect x="1198" y="153" width="30" height="2" fill="#a39990"/><rect x="1228" y="153" width="2" height="2" fill="#afa59c"/><rect x="1230" y="153" width="2" height="2" fill="#a39990"/><rect x="1232" y="153" width="6" height="2" fill="#afa59c"/><rect x="1238" y="153" width="16" height="2" fill="#bcb1a8"/><rect x="1254" y="153" width="2" height="2" fill="#afa59c"/><rect x="1188" y="155" width="2" height="2" fill="#afa59c"/><rect x="1190" y="155" width="18" height="2" fill="#a39990"/><rect x="1208" y="155" width="12" height="2" fill="#afa59c"/><rect x="1220" y="155" width="28" height="2" fill="#a39990"/><rect x="1248" y="155" width="2" height="2" fill="#afa59c"/><rect x="1186" y="157" width="14" height="2" fill="#afa59c"/><rect x="1200" y="157" width="10" height="2" fill="#bcb1a8"/><rect x="1210" y="157" width="6" height="2" fill="#c8bdb4"/><rect x="1216" y="157" width="12" height="2" fill="#bcb1a8"/><rect x="1228" y="157" width="6" height="2" fill="#afa59c"/><rect x="1234" y="157" width="4" height="2" fill="#a39990"/><rect x="1238" y="157" width="2" height="2" fill="#afa59c"/><rect x="1240" y="157" width="4" height="2" fill="#a39990"/><rect x="1184" y="159" width="12" height="2" fill="#c8bdb4"/><rect x="1196" y="159" width="2" height="2" fill="#d2c7bf"/><rect x="1198" y="159" width="2" height="2" fill="#c8bdb4"/><rect x="1200" y="159" width="4" height="2" fill="#d2c7bf"/><rect x="1204" y="159" width="2" height="2" fill="#c8bdb4"/><rect x="1206" y="159" width="4" height="2" fill="#d2c7bf"/><rect x="1210" y="159" width="22" height="2" fill="#c8bdb4"/><rect x="1232" y="159" width="8" height="2" fill="#bcb1a8"/><rect x="1182" y="161" width="22" height="2" fill="#d2c7bf"/><rect x="1204" y="161" width="10" height="2" fill="#c8bdb4"/><rect x="1214" y="161" width="4" height="2" fill="#bcb1a8"/><rect x="1218" y="161" width="4" height="2" fill="#c8bdb4"/><rect x="1222" y="161" width="2" height="2" fill="#bcb1a8"/><rect x="1224" y="161" width="2" height="2" fill="#c8bdb4"/><rect x="1226" y="161" width="2" height="2" fill="#bcb1a8"/><rect x="1228" y="161" width="8" height="2" fill="#c8bdb4"/><rect x="1180" y="163" width="14" height="2" fill="#d2c7bf"/><rect x="1194" y="163" width="8" height="2" fill="#c8bdb4"/><rect x="1202" y="163" width="4" height="2" fill="#bcb1a8"/><rect x="1206" y="163" width="8" height="2" fill="#afa59c"/><rect x="1214" y="163" width="2" height="2" fill="#a39990"/><rect x="1216" y="163" width="12" height="2" fill="#afa59c"/><rect x="1228" y="163" width="4" height="2" fill="#bcb1a8"/><rect x="1178" y="165" width="8" height="2" fill="#bcb1a8"/><rect x="1186" y="165" width="2" height="2" fill="#c8bdb4"/><rect x="1188" y="165" width="12" height="2" fill="#bcb1a8"/><rect x="1200" y="165" width="6" height="2" fill="#afa59c"/><rect x="1206" y="165" width="4" height="2" fill="#a39990"/><rect x="1210" y="165" width="2" height="2" fill="#afa59c"/><rect x="1212" y="165" width="2" height="2" fill="#a39990"/><rect x="1214" y="165" width="2" height="2" fill="#afa59c"/><rect x="1216" y="165" width="2" height="2" fill="#a39990"/><rect x="1218" y="165" width="2" height="2" fill="#afa59c"/><rect x="1220" y="165" width="10" height="2" fill="#a39990"/><rect x="1176" y="167" width="4" height="2" fill="#a39990"/><rect x="1180" y="167" width="22" height="2" fill="#afa59c"/><rect x="1202" y="167" width="2" height="2" fill="#bcb1a8"/><rect x="1204" y="167" width="2" height="2" fill="#afa59c"/><rect x="1206" y="167" width="10" height="2" fill="#bcb1a8"/><rect x="1216" y="167" width="2" height="2" fill="#afa59c"/><rect x="1218" y="167" width="2" height="2" fill="#bcb1a8"/><rect x="1220" y="167" width="6" height="2" fill="#afa59c"/><rect x="1174" y="169" width="2" height="2" fill="#bcb1a8"/><rect x="1176" y="169" width="18" height="2" fill="#afa59c"/><rect x="1194" y="169" width="4" height="2" fill="#bcb1a8"/><rect x="1198" y="169" width="2" height="2" fill="#c8bdb4"/><rect x="1200" y="169" width="2" height="2" fill="#bcb1a8"/><rect x="1202" y="169" width="4" height="2" fill="#c8bdb4"/><rect x="1206" y="169" width="8" height="2" fill="#d2c7bf"/><rect x="1214" y="169" width="2" height="2" fill="#c8bdb4"/><rect x="1216" y="169" width="6" height="2" fill="#d2c7bf"/><rect x="1172" y="171" width="4" height="2" fill="#bcb1a8"/><rect x="1176" y="171" width="4" height="2" fill="#c8bdb4"/><rect x="1180" y="171" width="10" height="2" fill="#bcb1a8"/><rect x="1190" y="171" width="6" height="2" fill="#c8bdb4"/><rect x="1196" y="171" width="22" height="2" fill="#d2c7bf"/><rect x="1172" y="173" width="16" height="2" fill="#c8bdb4"/><rect x="1188" y="173" width="2" height="2" fill="#d2c7bf"/><rect x="1190" y="173" width="2" height="2" fill="#c8bdb4"/><rect x="1192" y="173" width="18" height="2" fill="#d2c7bf"/><rect x="1210" y="173" width="4" height="2" fill="#c8bdb4"/><rect x="1174" y="175" width="6" height="2" fill="#bcb1a8"/><rect x="1180" y="175" width="16" height="2" fill="#c8bdb4"/><rect x="1196" y="175" width="10" height="2" fill="#bcb1a8"/><rect x="1206" y="175" width="2" height="2" fill="#afa59c"/><rect x="1208" y="175" width="4" height="2" fill="#bcb1a8"/><rect x="1174" y="177" width="2" height="2" fill="#a39990"/><rect x="1176" y="177" width="2" height="2" fill="#afa59c"/><rect x="1178" y="177" width="2" height="2" fill="#a39990"/><rect x="1180" y="177" width="8" height="2" fill="#afa59c"/><rect x="1188" y="177" width="2" height="2" fill="#bcb1a8"/><rect x="1190" y="177" width="8" height="2" fill="#afa59c"/><rect x="1198" y="177" width="4" height="2" fill="#a39990"/><rect x="1202" y="177" width="2" height="2" fill="#afa59c"/><rect x="1204" y="177" width="4" height="2" fill="#a39990"/><rect x="1104" y="251" width="2" height="2" fill="#c2aaa5"/><rect x="1106" y="251" width="2" height="2" fill="#ceb7b2"/><rect x="1108" y="251" width="10" height="2" fill="#c2aaa5"/><rect x="1094" y="253" width="6" height="2" fill="#ceb7b2"/><rect x="1100" y="253" width="2" height="2" fill="#d8c3be"/><rect x="1102" y="253" width="4" height="2" fill="#ceb7b2"/><rect x="1106" y="253" width="2" height="2" fill="#d8c3be"/><rect x="1108" y="253" width="2" height="2" fill="#ceb7b2"/><rect x="1110" y="253" width="2" height="2" fill="#d8c3be"/><rect x="1112" y="253" width="4" height="2" fill="#ceb7b2"/><rect x="1116" y="253" width="2" height="2" fill="#c2aaa5"/><rect x="1086" y="255" width="2" height="2" fill="#ceb7b2"/><rect x="1088" y="255" width="10" height="2" fill="#d8c3be"/><rect x="1098" y="255" width="6" height="2" fill="#e0ccc7"/><rect x="1104" y="255" width="8" height="2" fill="#d8c3be"/><rect x="1112" y="255" width="4" height="2" fill="#e0ccc7"/><rect x="1116" y="255" width="2" height="2" fill="#d8c3be"/><rect x="1086" y="257" width="6" height="2" fill="#d8c3be"/><rect x="1092" y="257" width="2" height="2" fill="#ceb7b2"/><rect x="1094" y="257" width="2" height="2" fill="#d8c3be"/><rect x="1096" y="257" width="4" height="2" fill="#ceb7b2"/><rect x="1100" y="257" width="2" height="2" fill="#d8c3be"/><rect x="1102" y="257" width="2" height="2" fill="#ceb7b2"/><rect x="1104" y="257" width="8" height="2" fill="#d8c3be"/><rect x="1112" y="257" width="6" height="2" fill="#e0ccc7"/><rect x="1070" y="259" width="2" height="2" fill="#e0ccc7"/><rect x="1072" y="259" width="8" height="2" fill="#d8c3be"/><rect x="1080" y="259" width="2" height="2" fill="#ceb7b2"/><rect x="1082" y="259" width="2" height="2" fill="#d8c3be"/><rect x="1084" y="259" width="4" height="2" fill="#ceb7b2"/><rect x="1088" y="259" width="10" height="2" fill="#c2aaa5"/><rect x="1098" y="259" width="4" height="2" fill="#b59c98"/><rect x="1102" y="259" width="6" height="2" fill="#c2aaa5"/><rect x="1108" y="259" width="8" height="2" fill="#ceb7b2"/><rect x="1116" y="259" width="2" height="2" fill="#d8c3be"/><rect x="1070" y="261" width="10" height="2" fill="#ceb7b2"/><rect x="1080" y="261" width="4" height="2" fill="#c2aaa5"/><rect x="1084" y="261" width="30" height="2" fill="#b59c98"/><rect x="1114" y="261" width="4" height="2" fill="#c2aaa5"/><rect x="1068" y="263" width="6" height="2" fill="#c2aaa5"/><rect x="1074" y="263" width="2" height="2" fill="#b59c98"/><rect x="1076" y="263" width="2" height="2" fill="#c2aaa5"/><rect x="1078" y="263" width="2" height="2" fill="#b59c98"/><rect x="1080" y="263" width="2" height="2" fill="#c2aaa5"/><rect x="1082" y="263" width="16" height="2" fill="#b59c98"/><rect x="1098" y="263" width="2" height="2" fill="#c2aaa5"/><rect x="1100" y="263" width="16" height="2" fill="#b59c98"/><rect x="1066" y="265" width="22" height="2" fill="#c2aaa5"/><rect x="1088" y="265" width="18" height="2" fill="#ceb7b2"/><rect x="1106" y="265" width="2" height="2" fill="#c2aaa5"/><rect x="1108" y="265" width="2" height="2" fill="#ceb7b2"/><rect x="1110" y="265" width="4" height="2" fill="#c2aaa5"/><rect x="1064" y="267" width="2" height="2" fill="#d8c3be"/><rect x="1066" y="267" width="4" height="2" fill="#ceb7b2"/><rect x="1070" y="267" width="2" height="2" fill="#d8c3be"/><rect x="1072" y="267" width="6" height="2" fill="#ceb7b2"/><rect x="1078" y="267" width="8" height="2" fill="#d8c3be"/><rect x="1102" y="267" width="12" height="2" fill="#d8c3be"/><rect x="1062" y="269" width="22" height="2" fill="#e0ccc7"/><rect x="1102" y="269" width="10" height="2" fill="#d8c3be"/><rect x="1068" y="271" width="16" height="2" fill="#e0ccc7"/><rect x="1068" y="273" width="14" height="2" fill="#d8c3be"/><rect x="768" y="343" width="6" height="2" fill="#c8bdb4"/><rect x="774" y="343" width="14" height="2" fill="#d2c7bf"/><rect x="788" y="343" width="2" height="2" fill="#c8bdb4"/><rect x="766" y="345" width="12" height="2" fill="#bcb1a8"/><rect x="778" y="345" width="12" height="2" fill="#c8bdb4"/><rect x="790" y="345" width="4" height="2" fill="#bcb1a8"/><rect x="764" y="347" width="14" height="2" fill="#afa59c"/><rect x="778" y="347" width="2" height="2" fill="#bcb1a8"/><rect x="780" y="347" width="4" height="2" fill="#afa59c"/><rect x="784" y="347" width="2" height="2" fill="#bcb1a8"/><rect x="786" y="347" width="10" height="2" fill="#afa59c"/><rect x="796" y="347" width="4" height="2" fill="#a39990"/><rect x="768" y="349" width="6" height="2" fill="#bcb1a8"/><rect x="774" y="349" width="22" height="2" fill="#afa59c"/><rect x="796" y="349" width="2" height="2" fill="#a39990"/><rect x="770" y="351" width="8" height="2" fill="#c8bdb4"/><rect x="778" y="351" width="12" height="2" fill="#bcb1a8"/><rect x="772" y="353" width="16" height="2" fill="#d2c7bf"/></g>
 <rect x="1038.5" y="274.8" width="15" height="14.2" fill="#aea38f"/><rect x="1039" y="275.5" width="14" height="4" fill="#c3b8a6"/><rect x="1039" y="286" width="14" height="2.5" fill="#c0b5a3"/>
 <rect x="1134" y="224" width="11" height="6" fill="#b8ad9a"/><rect x="1134.5" y="224.5" width="10" height="2.5" fill="#cfc4b2"/>
 <!-- circles -->
 <g fill="none" stroke="#141414" stroke-width="1.1">
  <circle cx="490.7" cy="643.3" r="91.8"/>
  <circle cx="519.8" cy="704.7" r="183.5"/>
  <circle cx="549.3" cy="614.2" r="367"/>
  <circle cx="538.75" cy="669.3" r="549.2"/>
 </g>
 <g stroke="#141414" stroke-width="1.1" fill="none">
  <path d="M490.7,643.3 L537,563.6"/>
  <path d="M519.8,704.7 L652,578"/>
  <path d="M549.3,614.2 L816.8,363.8"/>
  <path d="M538.75,669.3 L927,281.5"/>
  <path d="M407,647.2 L951.0,402.0"/>
  <path d="M538.75,669.3 L951.0,450.8"/>
  <path d="M1119,313.5 L1280,249.8 M1119,313.5 L1280,259.3"/>
  <path d="M651.7,719 L951,577 M1250,318.3 L1280,305.8 M1250,440 L1280,427 M1250,509.5 L1280,509.5"/>
  <path d="M865.5,96.5 L928,34"/>
  <path d="M983.5,691.7 L992.5,671 M983.5,691.7 L1280,691.7"/>
 </g>
 <!-- scale bar -->
 <path d="M1148.5,712 V716.6 H1277 V712" stroke="#3b3e41" stroke-width="1.4" fill="none"/>
 <text x="1212.5" y="712" font-size="9" fill="#222" text-anchor="middle">10 km</text>
 <!-- x marks -->
 <path d="M487.5,640.0999999999999 L493.9,646.5 M493.9,640.0999999999999 L487.5,646.5" stroke="#111" stroke-width="1.5"/><path d="M516.5999999999999,701.5 L523.0,707.9000000000001 M523.0,701.5 L516.5999999999999,707.9000000000001" stroke="#111" stroke-width="1.5"/><path d="M546.0999999999999,611.0 L552.5,617.4000000000001 M552.5,611.0 L546.0999999999999,617.4000000000001" stroke="#111" stroke-width="1.5"/>
 <path d="M534.4,561.0 L539.6,566.2 M539.6,561.0 L534.4,566.2" stroke="#111" stroke-width="1.5"/><path d="M649.4,575.4 L654.6,580.6 M654.6,575.4 L649.4,580.6" stroke="#111" stroke-width="1.5"/><path d="M814.1999999999999,361.2 L819.4,366.40000000000003 M819.4,361.2 L814.1999999999999,366.40000000000003" stroke="#111" stroke-width="1.5"/><path d="M924.4,278.9 L929.6,284.1 M929.6,278.9 L924.4,284.1" stroke="#111" stroke-width="1.5"/>
 <!-- labels -->
 <g font-size="8.8" fill="#3a3d40" lengthAdjust="spacingAndGlyphs">
  <text x="537.2" y="561.6" textLength="26.5" lengthAdjust="spacingAndGlyphs">10.0nm</text>
  <text x="652.2" y="575" textLength="26.8" lengthAdjust="spacingAndGlyphs">20.0nm</text>
  <text x="817.9" y="361.8" textLength="26.3" lengthAdjust="spacingAndGlyphs">40.0nm</text>
  <text x="927.7" y="279.2" textLength="26.3" lengthAdjust="spacingAndGlyphs">60.0nm</text>
  <text x="504.8" y="611.6" textLength="17.5" lengthAdjust="spacingAndGlyphs">30.3°</text>
  <text x="578" y="648.6" textLength="17" lengthAdjust="spacingAndGlyphs">45.0°</text>
  <text x="673.6" y="496.9" textLength="18.4" lengthAdjust="spacingAndGlyphs">46.9°</text>
  <text x="723.8" y="483.3" textLength="18" lengthAdjust="spacingAndGlyphs">45.0°</text>
 </g>
 <!-- blue squares -->
 <rect x="862" y="93" width="7.2" height="7.2" fill="#0000f0"/>
 <rect x="980" y="688.2" width="7.2" height="7.2" fill="#0000f0"/>
 <!-- units -->
 <g font-size="8.6" fill="#3038d0" stroke="#3038d0" stroke-width="0.25">
  <text x="890.4" y="249" textLength="34.6" lengthAdjust="spacingAndGlyphs">AAW CAP</text>
  <text x="787.7" y="460.3" textLength="92.8" lengthAdjust="spacingAndGlyphs">E-2C VAW-123 'Screwtops'</text>
  <text x="512.3" y="656.7" textLength="52.5" lengthAdjust="spacingAndGlyphs">America CVBG</text>
 </g>
 <path d="M902.1,261.8 A5.3,5.3 0 0 1 912.7,261.8" stroke="#3a40c8" stroke-width="1.3" fill="none"/>
 <circle cx="907.4" cy="261" r="0.9" fill="#111"/>
 <path d="M829.2,473.8 A5.4,5.4 0 0 1 840,473.8" stroke="#3a40c8" stroke-width="1.3" fill="none"/>
 <circle cx="834.6" cy="473.2" r="0.9" fill="#111"/>
 <!-- barometr -->
 <text x="390.7" y="634.3" font-size="8.6" fill="#d8403f" stroke="#d8403f" stroke-width="0.25" textLength="32.5" lengthAdjust="spacingAndGlyphs">Barometr</text>
 <path d="M407,640.8 L413.4,647.2 L407,653.6 L400.6,647.2 Z" stroke="#d64346" stroke-width="1.2" fill="none"/>
 <circle cx="407" cy="647.2" r="0.9" fill="#111"/>
 <!-- CVBG icon -->
 <circle cx="539" cy="669.3" r="5.6" stroke="#3a40c8" stroke-width="1.4" fill="none"/>
 <path d="M535.3000000000001,665.8000000000001 L542.1,672.6 M542.1,665.8000000000001 L535.3000000000001,672.6" stroke="#111" stroke-width="1.7"/>
 <path d="M530.8,665 V661.8 H534 M543.4,661.8 H546.6 V665 M546.6,673.6 V676.8 H543.4 M534,676.8 H530.8 V673.6" stroke="#333" stroke-width="1.4" fill="none"/>
 <!-- map center icon -->
 <path d="M395,699.2 H421.5 M408.2,686 V711.7" stroke="#222" stroke-width="1.1"/>
 <circle cx="408.2" cy="699.2" r="6.4" fill="#a9b5c0" stroke="#111" stroke-width="1.3"/>
 <path d="M408.2,699.2 V692.8 A6.4,6.4 0 0 1 414.6,699.2 Z M408.2,699.2 V705.6 A6.4,6.4 0 0 1 401.8,699.2 Z" fill="#111"/>
 <rect x="374" y="34" width="906" height="1" fill="#adb9c4"/><rect x="374" y="34" width="1" height="686" fill="#b3bfc9"/><rect x="374" y="718" width="906" height="1" fill="#b3bfc9"/><rect x="1278" y="34" width="1" height="686" fill="#b3bfc9"/><rect x="374" y="719" width="906" height="1" fill="#30343a"/><rect x="1279" y="34" width="1" height="686" fill="#3a4046"/>
</svg>

<!-- WEAPON REFERENCE -->
<div id="wref" class="a" style="left:388px;top:40px;width:467px;height:268px;background:#2b2f30;overflow:hidden">
  <div class="a" style="left:0;top:0;width:467px;height:15px;background:#1b1e1f;border-bottom:1px solid #0c0e0f"></div>
  <div class="a" style="left:0;top:0;width:467px;height:1px;background:#8d9aa6"></div>
  <div class="a" style="left:454px;top:1px;width:13px;height:13px;background:#2f3133"></div>
  <div class="w" style="left:456.5px;top:0;font-size:8.5px;color:#a8a8a8;line-height:15px">X</div>
  <div class="w" style="left:2px;top:0;line-height:15px;font-size:7.8px;color:#b8b8b8">Weapon Reference</div>
  <div class="w" style="left:3.5px;top:17px;line-height:15px;font-size:10.2px;color:#c0c0c0">RIM-7 Sea Sparrow</div>
  <div class="w" style="left:3.5px;top:37.5px">Weapon Type:</div><div class="w" style="left:115.5px;top:37.5px">Missile</div>
  <div class="w" style="left:3.5px;top:54.5px">Primary Engagement Mode:</div><div class="w" style="left:115.5px;top:54.5px">Anti-Aircraft</div>
  <div class="w" style="left:3.5px;top:66px">Secondary Engagement Mode:</div><div class="w" style="left:115.5px;top:66px">Anti-Surface</div>
  <div class="w" style="left:3.5px;top:81px">Guidance Type:</div><div class="w" style="left:115.5px;top:81px">Semi-Active Radar Homing</div>
  <div class="w" style="left:3.5px;top:92px">Mid Course Correction:</div><div class="w" style="left:115.5px;top:92px">None</div>
  <div class="w" style="left:3.5px;top:103.5px">Max Velocity:</div><div class="w" style="left:115.5px;top:103.5px">2300kts</div>
  <div class="w" style="left:3.5px;top:114.5px">Range:</div><div class="w" style="left:115.5px;top:114.5px">0.8 - 10nm</div>
  <div class="w" style="left:3.5px;top:125.5px">Attack Altitude:</div><div class="w" style="left:115.5px;top:125.5px">52 - 40000ft</div>
  <div class="w" style="left:3.5px;top:140.5px">Warhead Type:</div><div class="w" style="left:115.5px;top:140.5px">High Explosive</div>
  <div class="w" style="left:3.5px;top:151.5px">Warhead Size:</div><div class="w" style="left:115.5px;top:151.5px">kg</div>
  <div class="w" style="left:3px;top:202.3px;line-height:9.6px;color:#a2a4a6">&nbsp;The naval variant of the AIM-7 the RIM-7 Sea Sparrow is a common missile used by numerous nations within NATO as a point<br>defence system for warships. The system was developed as a lightweight system that could be retrofitted to existing ships as<br>quickly as possible, often in place of existing gun-based anti-aircraft weapons. In this incarnation, it was a very simple system<br>guided by a manually aimed radar illuminator. After its introduction, the system underwent significant development into an<br>automated system similar to other US Navy missiles like the RIM-2 Terrier.</div>
  <svg class="a" style="left:293px;top:18px" width="170" height="171" viewBox="0 0 170 171">
    <defs>
      <linearGradient id="sea" x1="0" y1="0" x2="0" y2="1">
        <stop offset="0" stop-color="#64839b"/><stop offset="0.45" stop-color="#4c708d"/><stop offset="1" stop-color="#335777"/>
      </linearGradient>
      <radialGradient id="smk" cx="0.5" cy="0.5" r="0.5">
        <stop offset="0" stop-color="#f3dcc2"/><stop offset="0.6" stop-color="#d9b596" stop-opacity="0.8"/><stop offset="1" stop-color="#a89080" stop-opacity="0"/>
      </radialGradient>
    </defs>
    <rect width="170" height="171" fill="url(#sea)"/>
    <filter id="blr" x="-50%" y="-50%" width="200%" height="200%"><feGaussianBlur stdDeviation="3"/></filter>
    <g opacity="0.22"><ellipse cx="77" cy="96" rx="17" ry="1.1" fill="#24405a"/><ellipse cx="100" cy="32" rx="11" ry="1.2" fill="#24405a"/><ellipse cx="16" cy="52" rx="5" ry="1.4" fill="#24405a"/><ellipse cx="7" cy="168" rx="18" ry="1.3" fill="#24405a"/><ellipse cx="27" cy="3" rx="11" ry="0.7" fill="#9fb8cc"/><ellipse cx="41" cy="5" rx="10" ry="1.0" fill="#24405a"/><ellipse cx="88" cy="109" rx="11" ry="1.3" fill="#9fb8cc"/><ellipse cx="47" cy="171" rx="18" ry="1.4" fill="#24405a"/><ellipse cx="54" cy="39" rx="8" ry="0.7" fill="#24405a"/><ellipse cx="68" cy="145" rx="9" ry="1.6" fill="#24405a"/><ellipse cx="0" cy="36" rx="17" ry="1.1" fill="#24405a"/><ellipse cx="68" cy="12" rx="13" ry="1.4" fill="#9fb8cc"/><ellipse cx="15" cy="57" rx="17" ry="1.4" fill="#9fb8cc"/><ellipse cx="42" cy="17" rx="5" ry="1.4" fill="#9fb8cc"/><ellipse cx="95" cy="77" rx="7" ry="1.3" fill="#9fb8cc"/><ellipse cx="109" cy="20" rx="10" ry="0.8" fill="#9fb8cc"/><ellipse cx="165" cy="137" rx="8" ry="1.5" fill="#9fb8cc"/><ellipse cx="67" cy="146" rx="13" ry="0.7" fill="#24405a"/><ellipse cx="36" cy="44" rx="15" ry="0.9" fill="#9fb8cc"/><ellipse cx="12" cy="15" rx="12" ry="0.8" fill="#24405a"/><ellipse cx="63" cy="77" rx="17" ry="1.1" fill="#24405a"/><ellipse cx="147" cy="31" rx="6" ry="1.5" fill="#24405a"/><ellipse cx="42" cy="32" rx="14" ry="1.5" fill="#9fb8cc"/><ellipse cx="162" cy="151" rx="12" ry="1.0" fill="#9fb8cc"/><ellipse cx="7" cy="165" rx="7" ry="1.3" fill="#9fb8cc"/><ellipse cx="140" cy="102" rx="8" ry="0.8" fill="#24405a"/><ellipse cx="12" cy="39" rx="12" ry="1.5" fill="#24405a"/><ellipse cx="48" cy="157" rx="7" ry="0.6" fill="#9fb8cc"/><ellipse cx="76" cy="10" rx="6" ry="1.0" fill="#24405a"/><ellipse cx="22" cy="62" rx="16" ry="1.6" fill="#24405a"/><ellipse cx="118" cy="100" rx="6" ry="0.6" fill="#9fb8cc"/><ellipse cx="155" cy="120" rx="17" ry="0.6" fill="#24405a"/><ellipse cx="82" cy="125" rx="8" ry="1.6" fill="#9fb8cc"/><ellipse cx="93" cy="126" rx="17" ry="1.3" fill="#24405a"/><ellipse cx="135" cy="156" rx="9" ry="1.3" fill="#24405a"/><ellipse cx="148" cy="71" rx="15" ry="1.5" fill="#24405a"/><ellipse cx="106" cy="65" rx="12" ry="1.2" fill="#9fb8cc"/><ellipse cx="109" cy="170" rx="16" ry="1.3" fill="#9fb8cc"/><ellipse cx="125" cy="99" rx="10" ry="1.4" fill="#9fb8cc"/><ellipse cx="128" cy="5" rx="12" ry="1.1" fill="#9fb8cc"/><ellipse cx="119" cy="85" rx="13" ry="1.5" fill="#9fb8cc"/><ellipse cx="2" cy="51" rx="13" ry="0.8" fill="#9fb8cc"/><ellipse cx="154" cy="113" rx="10" ry="1.5" fill="#9fb8cc"/><ellipse cx="113" cy="34" rx="10" ry="1.4" fill="#24405a"/><ellipse cx="150" cy="66" rx="12" ry="0.9" fill="#9fb8cc"/><ellipse cx="84" cy="143" rx="16" ry="1.3" fill="#24405a"/><ellipse cx="47" cy="29" rx="10" ry="0.9" fill="#9fb8cc"/><ellipse cx="70" cy="107" rx="11" ry="0.9" fill="#24405a"/><ellipse cx="167" cy="77" rx="5" ry="0.6" fill="#24405a"/><ellipse cx="7" cy="121" rx="12" ry="0.9" fill="#24405a"/><ellipse cx="3" cy="23" rx="10" ry="0.6" fill="#24405a"/><ellipse cx="40" cy="24" rx="5" ry="1.2" fill="#9fb8cc"/><ellipse cx="107" cy="112" rx="15" ry="1.6" fill="#24405a"/><ellipse cx="34" cy="81" rx="7" ry="0.6" fill="#9fb8cc"/><ellipse cx="121" cy="31" rx="8" ry="0.9" fill="#24405a"/><ellipse cx="88" cy="105" rx="15" ry="1.0" fill="#24405a"/><ellipse cx="154" cy="15" rx="17" ry="1.3" fill="#9fb8cc"/><ellipse cx="77" cy="107" rx="17" ry="1.0" fill="#24405a"/><ellipse cx="149" cy="136" rx="17" ry="1.1" fill="#24405a"/><ellipse cx="35" cy="123" rx="15" ry="1.2" fill="#24405a"/><ellipse cx="36" cy="154" rx="18" ry="1.6" fill="#24405a"/><ellipse cx="134" cy="55" rx="17" ry="1.5" fill="#9fb8cc"/><ellipse cx="14" cy="75" rx="12" ry="1.4" fill="#9fb8cc"/><ellipse cx="5" cy="138" rx="5" ry="1.4" fill="#9fb8cc"/><ellipse cx="57" cy="135" rx="6" ry="0.7" fill="#24405a"/><ellipse cx="123" cy="144" rx="14" ry="1.5" fill="#9fb8cc"/><ellipse cx="161" cy="15" rx="7" ry="1.1" fill="#9fb8cc"/><ellipse cx="124" cy="109" rx="11" ry="1.4" fill="#24405a"/><ellipse cx="53" cy="65" rx="16" ry="1.5" fill="#9fb8cc"/><ellipse cx="145" cy="166" rx="11" ry="1.2" fill="#9fb8cc"/></g>
    <g filter="url(#blr)">
      <path d="M0,128 C10,118 22,112 34,106 C44,100 52,96 58,94 C54,104 40,116 26,130 C16,140 8,150 0,160 Z" fill="#d8bfa8" opacity="0.9"/>
      <ellipse cx="8" cy="140" rx="10" ry="14" fill="#f2e2d0"/>
      <ellipse cx="24" cy="124" rx="8" ry="7" fill="#ead6c2"/>
      <ellipse cx="44" cy="106" rx="6" ry="4" fill="#e0c8b0" opacity="0.8"/>
    </g>
    <g transform="translate(159.5,12) rotate(142)">
      <path d="M0,0 C5,-3.4 10,-3.9 16,-3.9 L112,-3.9 L112,3.9 L16,3.9 C10,3.9 5,3.4 0,0 Z" fill="#e6eaec"/>
      <path d="M44,3.9 L56,17 L64,18 L62,3.9 Z" fill="#e2e6e8"/>
      <path d="M48,-3.9 L62,-18 L69,-18.5 L66,-3.9 Z" fill="#c8cdd1"/>
      <path d="M96,3.9 L105,10.5 L111,11 L112,3.9 Z" fill="#e2e6e8"/>
      <path d="M98,-3.9 L109,-14 L114,-14 L112,-3.9 Z" fill="#c8cdd1"/>
      <rect x="36" y="-3.9" width="5" height="7.8" fill="#7aa6c4"/>
      <rect x="70" y="-3.9" width="1.8" height="7.8" fill="#b0604a"/>
      <path d="M16,-1.5 L112,-1.5 L112,-3.9 L16,-3.9 Z" fill="#a9b1b8"/>
    </g>
  </svg>
</div>

<!-- FORMATION EDITOR -->
<div id="fed" class="a" style="left:951px;top:314px;width:299px;height:357px;background:#2b2f30;overflow:hidden">
  <div class="a" style="left:0;top:0;width:299px;height:13px;background:#1b1e1f"></div>
  <div class="a" style="left:286px;top:0;width:13px;height:13px;background:#313436"></div>
  <div class="w" style="left:288.5px;top:-1px;font-size:8.5px;color:#a8a8a8;line-height:15px">X</div>
  <div class="w" style="left:2px;top:-1px;line-height:15px;font-size:7.4px;color:#b0b0b0">FORMATION EDITOR</div>
  <div class="a" style="left:78px;top:14px;width:217.5px;height:21.5px;background:#232728"></div>
  <div class="a" style="left:78px;top:38px;width:62px;height:19px;background:#232728"></div>
  <div class="a" style="left:231px;top:38px;width:64.5px;height:19px;background:#232728"></div>
  <div class="w" style="left:7px;top:20px;color:#b4b4b4">Formation Name</div>
  <div class="w" style="left:81.5px;top:20px;color:#c0c0c0">America CVBG</div>
  <div class="w" style="left:7px;top:42px;color:#b4b4b4">Formation Leader</div>
  <div class="w" style="left:81.5px;top:42px;color:#c0c0c0">America CV-66</div>
  <div class="w" style="left:147px;top:42px;color:#b4b4b4">Max Formation Speed</div>
  <div class="w" style="left:238px;top:42px;color:#c0c0c0">0</div>
  <svg class="a" style="left:0;top:0" width="299" height="357" viewBox="951 314 299 357">
    <g fill="none" stroke="#56595c" stroke-width="1">
      <circle cx="1100.5" cy="514.6" r="26.5"/><circle cx="1100.5" cy="514.6" r="53"/><circle cx="1100.5" cy="514.6" r="79.5"/><circle cx="1100.5" cy="514.6" r="106"/><circle cx="1100.5" cy="514.6" r="132.5"/>
      <path d="M1100.5,514.6 L1233.0,514.6 M1100.5,514.6 L1215.2,580.9 M1100.5,514.6 L1166.8,629.3 M1100.5,514.6 L1100.5,647.1 M1100.5,514.6 L1034.2,629.3 M1100.5,514.6 L985.8,580.9 M1100.5,514.6 L968.0,514.6 M1100.5,514.6 L985.8,448.4 M1100.5,514.6 L1034.2,399.9 M1100.5,514.6 L1100.5,382.1 M1100.5,514.6 L1166.8,399.9 M1100.5,514.6 L1215.2,448.3"/>
    </g>
    <g font-size="7.8" fill="#a9abad">
      <text x="1097" y="386">10.00</text>
      <text x="1097" y="648.5">10.00</text>
      <text x="964.5" y="517.5">10.00</text>
      <text x="1229" y="517.5">10.00</text>
    </g>
    <g fill="#d9533c">
      <circle cx="1117" cy="432.5" r="3.8"/><circle cx="1031.3" cy="475.6" r="3.8"/><circle cx="1047.9" cy="514.8" r="3.8"/>
      <circle cx="1088.8" cy="521.2" r="3.8"/><circle cx="1207" cy="513" r="3.8"/><circle cx="1073.3" cy="564.3" r="3.8"/>
      <circle cx="1100.5" cy="514.6" r="4"/>
    </g>
    <path d="M1100.5,514.6 L1222,457.5 M1202.5,451.3 L1222,457.5 L1215,475.5" stroke="#d9533c" stroke-width="1.1" fill="none"/>
    <g font-size="7.8" fill="#b4b6b8" text-anchor="middle">
      <text x="1117.5" y="444.8">Valley Forge CG-50</text>
      <text x="1030.8" y="487.4">Conolly DD-979</text>
      <text x="1075.5" y="525.8">Seattle AOE-3 America CV-66</text>
      <text x="1089" y="532.8">Claude V. Rickets DDG-5</text>
      <text x="1207" y="524.8">Deyo DD-989</text>
      <text x="1072.5" y="575.3">Arkansas CGN-41</text>
    </g>
    <rect x="959.5" y="661" width="248" height="1.2" fill="#3d4043"/>
    <rect x="959.5" y="661" width="14" height="1.5" fill="#d9533c"/>
    <circle cx="973.3" cy="661.6" r="6.8" fill="#d9533c"/>
    <text x="1222" y="664.6" font-size="8" fill="#e2e2e2">10.00</text>
  </svg>
</div>
</body></html>
